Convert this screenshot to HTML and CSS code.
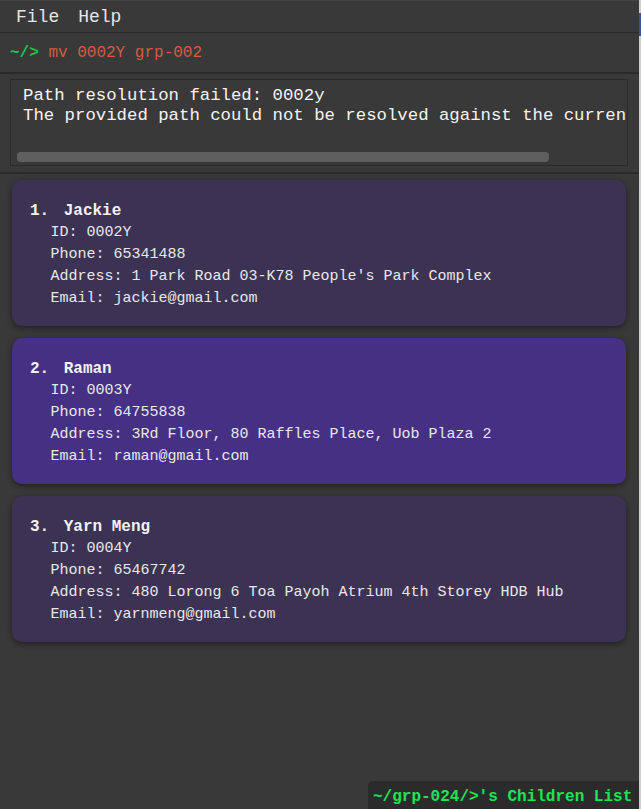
FILE: index.html
```html
<!DOCTYPE html>
<html>
<head>
<meta charset="utf-8">
<link rel="stylesheet" href="styles.css">
</head>
<body>
<div class="window">
  <div class="main">
    <div class="menubar">
      <span class="menu-item">File</span>
      <span class="menu-item">Help</span>
    </div>
    <div class="command">
      <span class="prompt">~/&gt;</span>
      <span class="cmd">mv 0002Y grp-002</span>
    </div>
    <div class="result-wrap">
      <div class="result">
        <div class="result-text">Path resolution failed: 0002y
The provided path could not be resolved against the curren</div>
        <div class="hscroll"></div>
      </div>
    </div>
    <div class="list">
      <div class="card">
        <div class="name-row"><span class="num">1.</span><span class="name">Jackie</span></div>
        <div class="detail">ID: 0002Y</div>
        <div class="detail">Phone: 65341488</div>
        <div class="detail">Address: 1 Park Road 03-K78 People's Park Complex</div>
        <div class="detail">Email: jackie@gmail.com</div>
      </div>
      <div class="card selected">
        <div class="name-row"><span class="num">2.</span><span class="name">Raman</span></div>
        <div class="detail">ID: 0003Y</div>
        <div class="detail">Phone: 64755838</div>
        <div class="detail">Address: 3Rd Floor, 80 Raffles Place, Uob Plaza 2</div>
        <div class="detail">Email: raman@gmail.com</div>
      </div>
      <div class="card">
        <div class="name-row"><span class="num">3.</span><span class="name">Yarn Meng</span></div>
        <div class="detail">ID: 0004Y</div>
        <div class="detail">Phone: 65467742</div>
        <div class="detail">Address: 480 Lorong 6 Toa Payoh Atrium 4th Storey HDB Hub</div>
        <div class="detail">Email: yarnmeng@gmail.com</div>
      </div>
    </div>
    <div class="statusbar">
      <span class="status">~/grp-024/&gt;'s Children List</span>
    </div>
  </div>
  <div class="edge">
    <div class="edge-gap"></div>
    <div class="edge-blue"></div>
  </div>
</div>
</body>
</html>
```

FILE: styles.css
```css
html, body {
  margin: 0;
  padding: 0;
  background: #393939;
  overflow: hidden;
}

.window {
  display: flex;
  width: 641px;
  height: 809px;
  font-family: "Courier New", "Liberation Mono", monospace;
}

.main {
  flex: 1;
  display: flex;
  flex-direction: column;
  min-width: 0;
  background: #393939;
}

.edge {
  width: 2px;
  background: #cfcfcf;
  display: flex;
  flex-direction: column;
}

.edge-gap {
  height: 13px;
}

.edge-blue {
  height: 23px;
  background: #3b4fa8;
}

.menubar {
  display: flex;
  align-items: center;
  border-top: 1px solid #454545;
  box-sizing: border-box;
  border-bottom: 1px solid #2a2a2a;
  height: 33px;
  padding: 1px 0 0 16px;
  gap: 19px;
  font-size: 18px;
  color: #e6e6e6;
}

.command {
  height: 41px;
  box-sizing: border-box;
  display: flex;
  align-items: center;
  padding: 0 0 0 10px;
  font-size: 16px;
  border-bottom: 2px solid #2a2a2a;
  white-space: pre;
}

.prompt {
  color: #1fc44c;
  font-weight: bold;
  margin-right: 9.6px;
}

.cmd {
  color: #d65b3e;
}

.result-wrap {
  padding: 5px 11px 6px 10px;
  border-bottom: 2px solid #2a2a2a;
}

.result {
  border: 1px solid #2a2a2a;
  height: 85px;
  overflow: hidden;
  display: flex;
  flex-direction: column;
}

.result-text {
  white-space: pre;
  font-size: 17.33px;
  line-height: 20px;
  color: #f4f4f4;
  padding: 6px 0 0 12px;
  height: 66px;
  box-sizing: border-box;
  overflow: hidden;
}

.hscroll {
  margin: 6px 0 0 6px;
  width: 532px;
  height: 10px;
  border-radius: 4px;
  background: #5f5f5f;
}

.list {
  flex: 1;
  display: flex;
  flex-direction: column;
  gap: 12px;
  padding: 6px 13px 0 12px;
}

.card {
  background: #3c3354;
  border-radius: 10px;
  padding: 20px 18px 16px 18px;
  box-shadow: 0 2px 6px rgba(0, 0, 0, 0.45);
  color: #e8e8e8;
  line-height: 22px;
}

.card.selected {
  background: #463084;
}

.name-row {
  display: flex;
  gap: 14.5px;
  font-size: 16px;
  font-weight: bold;
  color: #f2f2f2;
}

.detail {
  font-size: 15px;
  padding-left: 20.5px;
  white-space: pre;
}

.statusbar {
  display: flex;
  justify-content: flex-end;
}

.status {
  height: 28px;
  display: flex;
  align-items: center;
  background: #2b2b2b;
  border-top-left-radius: 5px;
  padding: 4px 6px 0 5px;
  box-sizing: border-box;
  width: 271px;
  font-size: 16px;
  font-weight: bold;
  color: #1ee455;
  white-space: pre;
}
```
